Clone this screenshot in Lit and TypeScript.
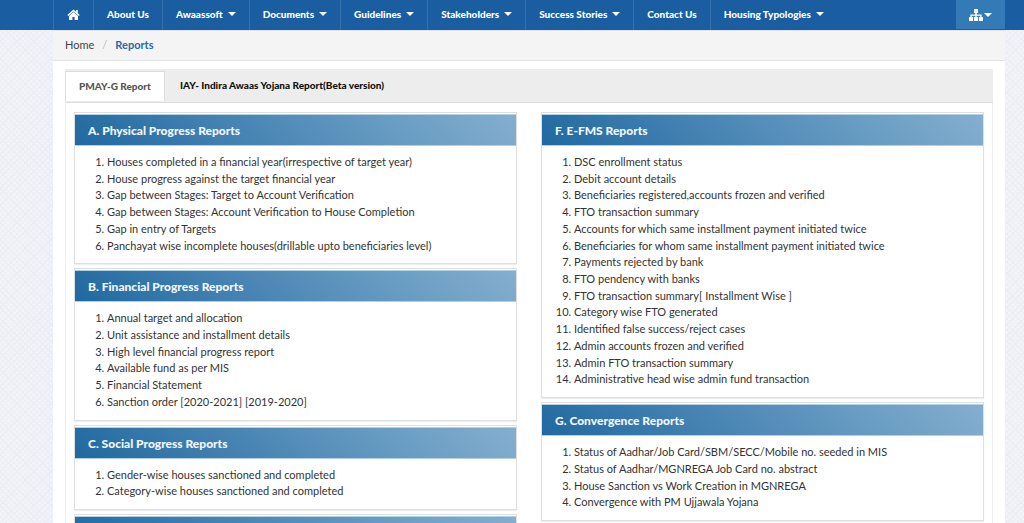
import { LitElement, html, css, svg } from "lit";
import { customElement, property, state } from "lit/decorators.js";
import { classMap } from "lit/directives/class-map.js";

interface Section {
  title: string;
  items: string[];
}

const MENU: { label: string; drop: boolean }[] = [
  { label: "About Us", drop: false },
  { label: "Awaassoft", drop: true },
  { label: "Documents", drop: true },
  { label: "Guidelines", drop: true },
  { label: "Stakeholders", drop: true },
  { label: "Success Stories", drop: true },
  { label: "Contact Us", drop: false },
  { label: "Housing Typologies", drop: true },
];

const LEFT: Section[] = [
  {
    title: "A. Physical Progress Reports",
    items: [
      "Houses completed in a financial year(irrespective of target year)",
      "House progress against the target financial year",
      "Gap between Stages: Target to Account Verification",
      "Gap between Stages: Account Verification to House Completion",
      "Gap in entry of Targets",
      "Panchayat wise incomplete houses(drillable upto beneficiaries level)",
    ],
  },
  {
    title: "B. Financial Progress Reports",
    items: [
      "Annual target and allocation",
      "Unit assistance and installment details",
      "High level financial progress report",
      "Available fund as per MIS",
      "Financial Statement",
      "Sanction order [2020-2021] [2019-2020]",
    ],
  },
  {
    title: "C. Social Progress Reports",
    items: [
      "Gender-wise houses sanctioned and completed",
      "Category-wise houses sanctioned and completed",
    ],
  },
  { title: "", items: [] },
];

const RIGHT: Section[] = [
  {
    title: "F. E-FMS Reports",
    items: [
      "DSC enrollment status",
      "Debit account details",
      "Beneficiaries registered,accounts frozen and verified",
      "FTO transaction summary",
      "Accounts for which same installment payment initiated twice",
      "Beneficiaries for whom same installment payment initiated twice",
      "Payments rejected by bank",
      "FTO pendency with banks",
      "FTO transaction summary[ Installment Wise ]",
      "Category wise FTO generated",
      "Identified false success/reject cases",
      "Admin accounts frozen and verified",
      "Admin FTO transaction summary",
      "Administrative head wise admin fund transaction",
    ],
  },
  {
    title: "G. Convergence Reports",
    items: [
      "Status of Aadhar/Job Card/SBM/SECC/Mobile no. seeded in MIS",
      "Status of Aadhar/MGNREGA Job Card no. abstract",
      "House Sanction vs Work Creation in MGNREGA",
      "Convergence with PM Ujjawala Yojana",
    ],
  },
];

const homeIcon = svg`<path d="M6.5 0.5 L0.3 6 L1.2 7 L6.5 2.4 L11.8 7 L12.7 6 L10.8 4.3 V1 H9.1 V2.8 Z"/><path d="M6.5 3 L2 6.9 V11 H5.4 V8 H7.6 V11 H11 V6.9 Z"/>`;
const sitemapIcon = svg`<path d="M5 0 H9 V4 H7.7 V5.4 H12.6 V8 H14 V12 H9.9 V8 H11.2 V6.7 H7.7 V8 H9 V12 H5 V8 H6.3 V6.7 H2.8 V8 H4.1 V12 H0 V8 H1.4 V5.4 H6.3 V4 H5 Z"/>`;

@customElement("report-card")
export class ReportCard extends LitElement {
  @property({ attribute: false }) section: Section = { title: "", items: [] };

  static styles = css`
    :host {
      display: block;
      background: #fff;
      border: 1px solid #dfdfdf;
      box-shadow: 0 1px 1px #eee;
      padding-top: 1px;
    }
    .title {
      margin: 0;
      height: 32px;
      box-sizing: border-box;
      padding: 0 13px;
      border: solid #b3cfe2;
      border-width: 1px 0;
      background: linear-gradient(45deg, #2069a0 0%, #4985b4 40%, #6c9fc4 75%, #85aecf 100%);
      color: #f2f7fc;
      font-size: 12px;
      font-weight: 900;
      line-height: 31px;
    }
    .list {
      margin: 0;
      padding: 8px 8px 9px 32px;
      font-size: 11px;
      line-height: 1.52;
      color: #333;
    }
    .link {
      color: inherit;
      text-decoration: none;
    }
    .link:hover {
      color: #1a5da0;
    }
  `;

  render() {
    return html`
      <h2 class="title">${this.section.title}</h2>
      <ol class="list">
        ${this.section.items.map((t) => html`<li><a class="link" href="#">${t}</a></li>`)}
      </ol>
    `;
  }
}

@customElement("app-root")
export class AppRoot extends LitElement {
  @state() private tab = 0;

  static styles = css`
    :host {
      display: block;
      height: 100vh;
      overflow: hidden;
      font-family: Lato, "Open Sans", sans-serif;
      font-size: 10px;
      color: #333;
      background-color: #f2f3f8;
      background-image: repeating-linear-gradient(45deg, #ebedf3 0 1px, transparent 1px 4px),
        repeating-linear-gradient(-45deg, #ebedf3 0 1px, transparent 1px 4px);
    }
    .nav {
      display: flex;
      box-sizing: border-box;
      height: 30px;
      padding: 0 19px 0 53px;
      background: #1a5da0;
    }
    .entry {
      display: flex;
      align-items: center;
      gap: 5px;
      padding: 0 13px 2px;
      border-left: 1px solid #3671ab;
      color: #fff;
      font-weight: 900;
      text-decoration: none;
      white-space: nowrap;
    }
    .caret {
      border: 4px solid transparent;
      border-top-color: #fff;
      border-bottom: 0;
    }
    .icon {
      fill: #fff;
      display: block;
    }
    .sites {
      display: flex;
      align-items: center;
      gap: 1px;
      margin: 0 0 1px auto;
      padding: 0 13px;
      border: 0;
      background: #337ab7;
    }
    .page {
      margin: 0 19px 0 53px;
      min-height: 100vh;
      background: #fff;
    }
    .crumbs {
      display: flex;
      gap: 8px;
      padding: 0 12px 2px;
      line-height: 27px;
      background: #f4f4f4;
      border-top: 1px solid #e0e3e8;
      border-bottom: 1px solid #e3e3e3;
      font-size: 11px;
    }
    .home {
      color: #444;
      text-decoration: none;
    }
    .slash {
      color: #bbb;
    }
    .here {
      color: #2a6aa8;
      font-weight: 700;
    }
    .content {
      padding: 8px 12px 0;
    }
    .tabs {
      display: flex;
      box-sizing: border-box;
      height: 34px;
      padding-top: 2px;
      background: #ededed;
      border-bottom: 1px solid #ddd;
    }
    .tab {
      padding: 0 15px 2px;
      margin-bottom: 1px;
      border: 0;
      background: none;
      font: inherit;
      font-weight: 900;
      color: #111;
    }
    .active {
      padding: 0 13px 2px;
      border: 1px solid #ddd;
      border-bottom: 0;
      background: #fff;
      color: #555;
    }
    .panel {
      display: grid;
      grid-template-columns: 1fr 1fr;
      gap: 24px;
      padding: 9px 8px 0;
      border: solid #eee;
      border-width: 0 1px;
    }
    .column {
      display: flex;
      flex-direction: column;
      gap: 4px;
    }
  `;

  render() {
    const tabs = ["PMAY-G Report", "IAY- Indira Awaas Yojana Report(Beta version)"];
    return html`
      <nav class="nav">
        <a class="entry" href="#" aria-label="Home">
          <svg class="icon" width="13" height="11" viewBox="0 0 13 11">${homeIcon}</svg>
        </a>
        ${MENU.map(
          (m) => html`<a class="entry" href="#">${m.label}${m.drop ? html`<span class="caret"></span>` : null}</a>`
        )}
        <button class="sites" aria-label="Sites">
          <svg class="icon" width="14" height="12" viewBox="0 0 14 12">${sitemapIcon}</svg>
          <span class="caret"></span>
        </button>
      </nav>
      <main class="page">
        <div class="crumbs">
          <a class="home" href="#">Home</a><span class="slash">/</span><span class="here">Reports</span>
        </div>
        <div class="content">
          <div class="tabs" role="tablist">
            ${tabs.map(
              (t, i) => html`<button
                role="tab"
                class=${classMap({ tab: true, active: this.tab === i })}
                @click=${() => (this.tab = i)}
              >${t}</button>`
            )}
          </div>
          <div class="panel">
            ${[LEFT, RIGHT].map(
              (col) => html`<div class="column">
                ${col.map((s) => html`<report-card .section=${s}></report-card>`)}
              </div>`
            )}
          </div>
        </div>
      </main>
    `;
  }
}
